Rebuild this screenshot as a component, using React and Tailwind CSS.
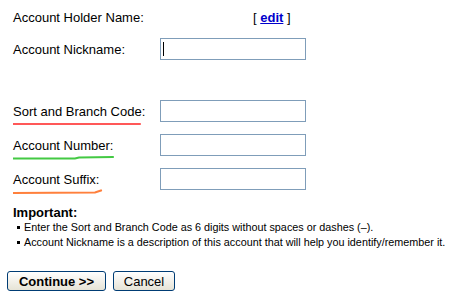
import React from "react";

// Etiket altındaki el çizimi vurgu çizgileri
function Underline({ color, d, width }) {
  return (
    <svg
      className="absolute left-0 top-full pointer-events-none"
      width={width}
      height="9"
      viewBox={`0 0 ${width} 9`}
    >
      <path d={d} stroke={color} strokeWidth="2.2" fill="none" strokeLinecap="round" opacity="0.85" />
    </svg>
  );
}

function Field({ label, underline }) {
  return (
    <div className="flex items-center h-[34px]">
      <div className="w-[160px] pl-[13px]">
        <span className="relative inline-block">
          {label}
          {underline}
        </span>
      </div>
      <input
        type="text"
        className="w-[146px] h-[22px] border border-[#7f9db9] bg-white px-1 outline-none"
      />
    </div>
  );
}

export default function App() {
  return (
    <div
      className="w-[454px] h-[298px] bg-white text-[13px] text-black leading-[15px] overflow-hidden"
      style={{ fontFamily: '"Liberation Sans", Arial, sans-serif' }}
    >
      <div className="pt-[2px]">
        {/* Hesap sahibi */}
        <div className="flex items-center h-[30px]">
          <div className="w-[253px] pl-[13px]">Account Holder Name:</div>
          <div>
            [{" "}
            <a href="#" className="font-bold text-[#0000cc] underline">
              edit
            </a>{" "}
            ]
          </div>
        </div>

        {/* Takma ad */}
        <div className="flex items-center h-[34px]">
          <div className="w-[160px] pl-[13px]">Account Nickname:</div>
          <div className="relative">
            <input
              type="text"
              className="w-[146px] h-[22px] border border-[#7f9db9] bg-white px-1 outline-none"
            />
            <span className="absolute left-[3px] top-[4px] w-px h-[14px] bg-black" />
          </div>
        </div>

        <div className="h-[28px]" />

        <Field
          label="Sort and Branch Code:"
          underline={
            <Underline color="#ff3b3b" width={132} d="M0 5 L127 5" />
          }
        />
        <Field
          label="Account Number:"
          underline={
            <Underline color="#22c022" width={106} d="M-1 5.5 L62 5.5 L66 4.5 L100 4" />
          }
        />
        <Field
          label="Account Suffix:"
          underline={
            <Underline color="#ff6a1a" width={92} d="M0 6 L82 5.5 L88 3.5" />
          }
        />

        {/* Önemli notlar */}
        <div className="mt-[9px] pl-[13px]">
          <div className="font-bold text-[13px] leading-[15px]">Important:</div>
          <ul className="text-[10.8px] leading-[15px] pl-[4px]">
            <li className="flex items-center">
              <span className="inline-block w-[3px] h-[3px] bg-black mr-[4px]" />
              Enter the Sort and Branch Code as 6 digits without spaces or dashes (–).
            </li>
            <li className="flex items-center">
              <span className="inline-block w-[3px] h-[3px] bg-black mr-[4px]" />
              Account Nickname is a description of this account that will help you identify/remember it.
            </li>
          </ul>
        </div>

        {/* Butonlar */}
        <div className="flex gap-[7px] pl-[7px] mt-[21px]">
          <button className="w-[99px] h-[20px] rounded-[3px] border border-[#003c74] bg-gradient-to-b from-white to-[#e6e3d6] font-bold text-[13px] leading-none">
            Continue &gt;&gt;
          </button>
          <button className="w-[62px] h-[20px] rounded-[3px] border border-[#003c74] bg-gradient-to-b from-white to-[#e6e3d6] text-[13px] leading-none">
            Cancel
          </button>
        </div>
      </div>
    </div>
  );
}
